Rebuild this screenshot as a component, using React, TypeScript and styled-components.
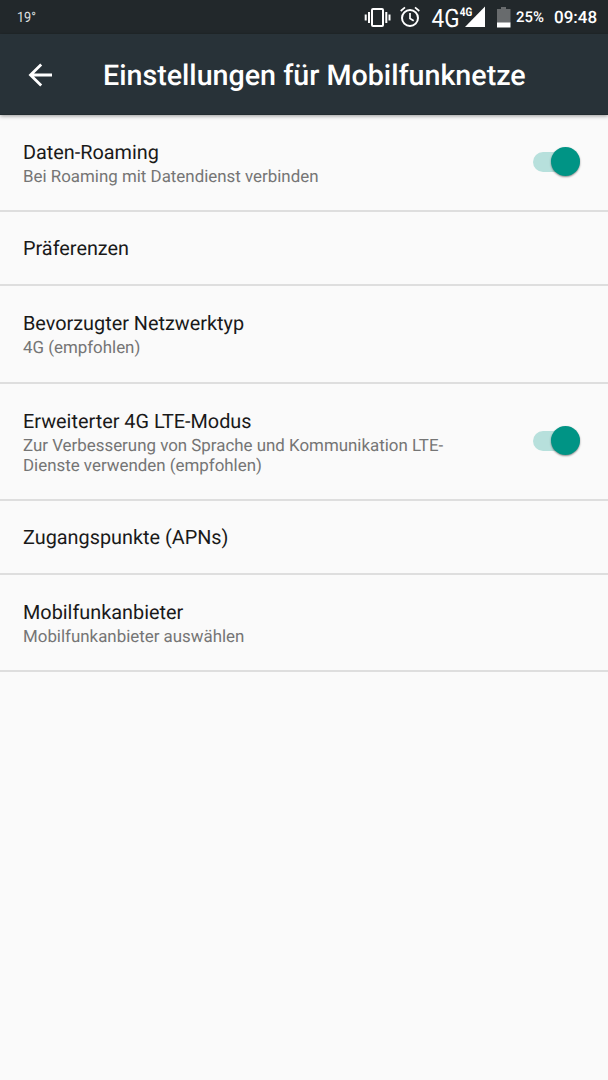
import React from "react";
import styled, { createGlobalStyle } from "styled-components";

const GlobalStyle = createGlobalStyle`
  * { box-sizing: border-box; }
  html, body { margin: 0; background: #fafafa; }
  body { font-family: Roboto, sans-serif; overflow: hidden; text-rendering: geometricPrecision; }
`;

const Screen = styled.div`
  width: 608px;
  height: 1080px;
  background: #fafafa;
  display: flex;
  flex-direction: column;
`;

const StatusBar = styled.div`
  height: 34px;
  flex: none;
  display: flex;
  align-items: center;
  padding: 2px 11px 0 17px;
  background: #22282b;
  color: #fff;
`;

const Temperature = styled.span`
  flex: 1;
  font-size: 14.4px;
  line-height: 16px;
  color: #dfe0e0;
  transform: scaleX(0.88);
  transform-origin: left;
`;

const StatusIcon = styled.svg<{ $gap: number }>`
  display: block;
  flex: none;
  overflow: visible;
  margin: -2px ${(p) => p.$gap}px 0 0;
`;

const Battery = styled.span`
  width: 38px;
  margin-top: -2px;
  font-size: 14.9px;
  line-height: 18px;
  font-weight: 500;
`;

const Clock = styled.span`
  width: 43px;
  font-size: 17px;
  line-height: 20px;
  font-weight: 500;
  white-space: nowrap;
`;

const AppBar = styled.header`
  height: 81px;
  flex: none;
  display: flex;
  align-items: center;
  padding-left: 28px;
  background: #283238;
  border-bottom: 1px solid #222c30;
  box-shadow: 0 1px 4px rgba(0, 0, 0, 0.4);
  color: #fff;
`;

const BackIcon = styled.svg`
  display: block;
  width: 24px;
  height: 24px;
  margin: 1px 51px 0 0;
`;

const Title = styled.h1`
  margin: 1px 0 0;
  font-size: 28.65px;
  line-height: 34px;
  font-weight: 500;
  white-space: nowrap;
`;

const Row = styled.div<{ $height: number }>`
  height: ${(p) => p.$height}px;
  flex: none;
  display: flex;
  align-items: center;
  justify-content: space-between;
  padding: 0 28px 0 23px;
  border-bottom: 2px solid #dedede;
`;

const Labels = styled.div`
  display: flex;
  flex-direction: column;
  padding-top: 1px;
`;

const Label = styled.div`
  font-size: 19.85px;
  line-height: 25px;
  color: #191919;
  white-space: nowrap;
`;

const Summary = styled.div`
  font-size: 16.9px;
  line-height: 20px;
  margin-top: 2px;
  color: #757575;
  white-space: pre;
`;

const Track = styled.div`
  width: 47px;
  height: 20px;
  margin-bottom: 2px;
  border-radius: 10px;
  background: #b7e0dc;
  display: flex;
  align-items: center;
  justify-content: flex-end;
`;

const Thumb = styled.div`
  width: 29px;
  height: 29px;
  flex: none;
  border-radius: 50%;
  background: #009485;
  box-shadow: 0 1px 2px rgba(0, 0, 0, 0.45);
`;

type Setting = { label: string; summary?: string; height: number; on?: boolean };

const settings: Setting[] = [
  { label: "Daten-Roaming", summary: "Bei Roaming mit Datendienst verbinden", height: 97, on: true },
  { label: "Präferenzen", height: 74 },
  { label: "Bevorzugter Netzwerktyp", summary: "4G (empfohlen)", height: 98 },
  {
    label: "Erweiterter 4G LTE-Modus",
    summary: "Zur Verbesserung von Sprache und Kommunikation LTE-\nDienste verwenden (empfohlen)",
    height: 117,
    on: true,
  },
  { label: "Zugangspunkte (APNs)", height: 74 },
  { label: "Mobilfunkanbieter", summary: "Mobilfunkanbieter auswählen", height: 97 },
];

const NetworkText = styled.text`
  font-family: Roboto, sans-serif;
  fill: #fff;
`;

export default function App() {
  return (
    <Screen>
      <GlobalStyle />
      <StatusBar>
        <Temperature>19°</Temperature>
        <StatusIcon $gap={9} width="27" height="22" viewBox="364 6 27 22" fill="none" stroke="#fff" strokeWidth="2">
          <rect x="372" y="9" width="11" height="17" rx="1" />
          <path d="M369 12v11M386.300 12v11M365.700 14.500v6M389.500 14.500v6" />
        </StatusIcon>
        <StatusIcon $gap={12} width="20" height="22" viewBox="400 6 20 22" fill="none" stroke="#fff" strokeWidth="2">
          <circle cx="410" cy="18" r="8" />
          <path d="M410 13v5.500l3.700 2.300M400.700 11l4.300-3.600M415 7.400l4.300 3.600" strokeWidth="1.700" />
        </StatusIcon>
        <StatusIcon $gap={11} width="54" height="26" viewBox="432 4 54 26">
          <NetworkText x="431.500" y="27" fontSize="25.500" textLength="28" lengthAdjust="spacingAndGlyphs">4G</NetworkText>
          <NetworkText x="459.700" y="15.700" fontSize="12" fontWeight="700" textLength="12.500" lengthAdjust="spacingAndGlyphs">4G</NetworkText>
          <path d="M485 6.500V27H465z" fill="#fff" />
        </StatusIcon>
        <StatusIcon $gap={5} width="14" height="22" viewBox="497 6 14 22">
          <path d="M497 9h4V7h5v2h4.500v14H497z" fill="#686b6d" />
          <path d="M497 22.500h13.500v5H497z" fill="#fff" />
        </StatusIcon>
        <Battery>25%</Battery>
        <Clock>09:48</Clock>
      </StatusBar>
      <AppBar>
        <BackIcon viewBox="0 0 24 24" fill="none" stroke="#fff" strokeWidth="2.800">
          <path d="M24 12H3M13.200 1.500L2.500 12l10.700 10.500" />
        </BackIcon>
        <Title>Einstellungen für Mobilfunknetze</Title>
      </AppBar>
      {settings.map((s) => (
        <Row key={s.label} $height={s.height}>
          <Labels>
            <Label>{s.label}</Label>
            {s.summary && <Summary>{s.summary}</Summary>}
          </Labels>
          {s.on && (
            <Track>
              <Thumb />
            </Track>
          )}
        </Row>
      ))}
    </Screen>
  );
}
